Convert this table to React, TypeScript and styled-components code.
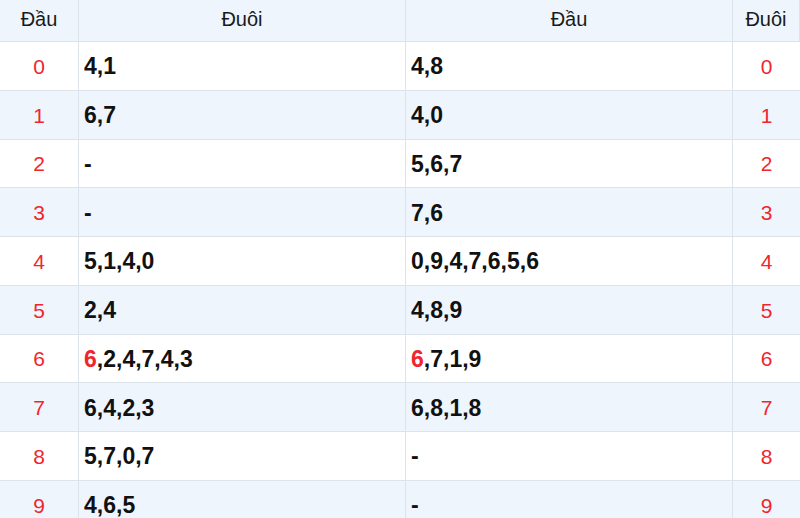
import React from 'react';
import styled, { createGlobalStyle } from 'styled-components';

const GlobalStyle = createGlobalStyle`
  html, body {
    margin: 0;
    padding: 0;
    background: #ffffff;
  }
  body {
    font-family: "Liberation Sans", Arial, sans-serif;
    overflow: hidden;
  }
`;

// --- Styled Components ---

const Table = styled.div`
  display: grid;
  grid-template-columns: 79px 327px 327px 1fr;
  grid-template-rows: 42px repeat(10, 48.75px);
  width: 800px;
`;

const HeadCell = styled.div`
  box-sizing: border-box;
  display: flex;
  align-items: center;
  justify-content: center;
  background: #eef5fd;
  border-right: 1px solid #dde3ea;
  border-bottom: 1px solid #dde3ea;
  font-size: 20px;
  color: #1a1a1a;
  padding-bottom: 2px;

  &:last-child {
    border-right: none;
  }
`;

const Cell = styled.div<{ $striped: boolean; $last?: boolean }>`
  box-sizing: border-box;
  display: flex;
  align-items: center;
  padding-top: 2px;
  background: ${(p) => (p.$striped ? '#eef5fd' : '#ffffff')};
  border-right: ${(p) => (p.$last ? 'none' : '1px solid #dde3ea')};
  border-bottom: 1px solid #dde3ea;
`;

const IndexCell = styled(Cell)`
  justify-content: center;
  font-size: 21px;
  color: #f0262e;
`;

const ValueCell = styled(Cell)`
  padding-left: 5px;
  font-size: 23px;
  font-weight: 700;
  color: #111111;
`;

const Hit = styled.span`
  color: #f0262e;
`;

// --- Data ---

// a leading "*" marks a number that is shown in red
interface Row {
  duoi: string[];
  dau: string[];
}

const ROWS: Row[] = [
  { duoi: ['4', '1'], dau: ['4', '8'] },
  { duoi: ['6', '7'], dau: ['4', '0'] },
  { duoi: ['-'], dau: ['5', '6', '7'] },
  { duoi: ['-'], dau: ['7', '6'] },
  { duoi: ['5', '1', '4', '0'], dau: ['0', '9', '4', '7', '6', '5', '6'] },
  { duoi: ['2', '4'], dau: ['4', '8', '9'] },
  { duoi: ['*6', '2', '4', '7', '4', '3'], dau: ['*6', '7', '1', '9'] },
  { duoi: ['6', '4', '2', '3'], dau: ['6', '8', '1', '8'] },
  { duoi: ['5', '7', '0', '7'], dau: ['-'] },
  { duoi: ['4', '6', '5'], dau: ['-'] },
];

function Numbers({ items }: { items: string[] }) {
  return (
    <>
      {items.map((n, i) => (
        <React.Fragment key={i}>
          {i > 0 && ','}
          {n.startsWith('*') ? <Hit>{n.slice(1)}</Hit> : n}
        </React.Fragment>
      ))}
    </>
  );
}

export default function App() {
  return (
    <>
      <GlobalStyle />
      <Table>
        <HeadCell>Đầu</HeadCell>
        <HeadCell>Đuôi</HeadCell>
        <HeadCell>Đầu</HeadCell>
        <HeadCell>Đuôi</HeadCell>
        {ROWS.map((row, i) => {
          const striped = i % 2 === 1;
          return (
            <React.Fragment key={i}>
              <IndexCell $striped={striped}>{i}</IndexCell>
              <ValueCell $striped={striped}>
                <Numbers items={row.duoi} />
              </ValueCell>
              <ValueCell $striped={striped}>
                <Numbers items={row.dau} />
              </ValueCell>
              <IndexCell $striped={striped} $last>{i}</IndexCell>
            </React.Fragment>
          );
        })}
      </Table>
    </>
  );
}
